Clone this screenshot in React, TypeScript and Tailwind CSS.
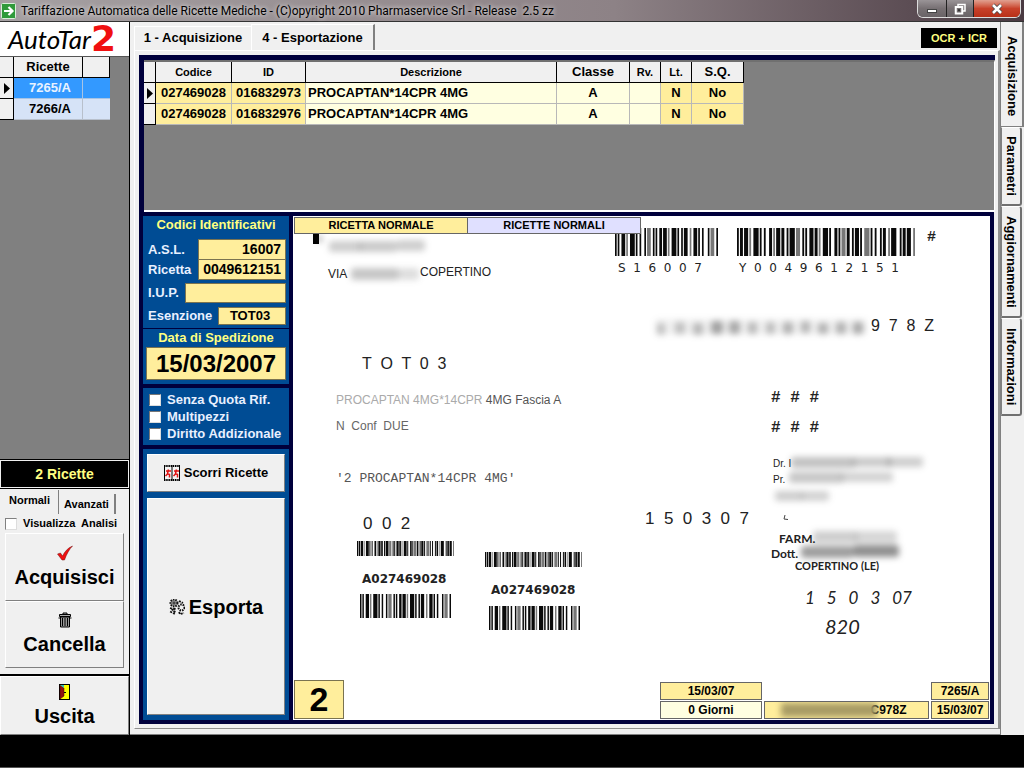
import React from "react";

const raised = "border border-t-white border-l-white border-r-[#808080] border-b-[#808080]";
const field = "border border-[#7a7350] bg-[#ffee9c] text-black";

function Barcode({ code, className }: { code: string; className: string }) {
  const bars: { x: number; w: number }[] = [];
  let x = 0;
  code.split("").forEach((c, i) => {
    const w = Number(c) + (i % 2 === 0 ? 0.6 : 0);
    if (i % 2 === 0) bars.push({ x, w });
    x += w;
  });
  return (
    <svg aria-hidden="true" className={className} viewBox={`0 0 ${x} 10`} preserveAspectRatio="none">
      {bars.map((b, i) => (
        <rect key={i} x={b.x} y="0" width={b.w} height="10" fill={i % 5 === 3 ? "#777" : "#0a0a0a"} />
      ))}
    </svg>
  );
}

function Smudges({ className, blobs }: { className: string; blobs: number[][] }) {
  return (
    <svg aria-hidden="true" className={`absolute blur-[3px] ${className}`}>
      {blobs.map(([x, y, w, h, o], i) => (
        <rect key={i} x={x} y={y} width={w} height={h} rx="3" fill="#333" fillOpacity={o / 100} />
      ))}
    </svg>
  );
}

function TitleBar() {
  const glass = "flex items-center justify-center border-r border-[#222] bg-linear-to-b from-[#9a9497] via-[#777073] to-[#6a6467]";
  return (
    <header className="flex h-[22px] shrink-0 items-center border-b border-[#333] bg-linear-to-r from-[#a5a0a2] via-[#8d8286] via-60% to-[#4a3a42] pl-px">
      <svg className="h-4 w-[15px] shrink-0" viewBox="0 0 15 16">
        <rect x="0.5" y="0.5" width="14" height="15" rx="1" fill="#2f9a3a" stroke="#d8efd8" />
        <path d="M3 8h8M7.500 4l4 4-4 4" fill="none" stroke="#fff" strokeWidth="2.200" />
      </svg>
      <h1 className="ml-[5px] grow font-[Roboto,sans-serif] text-[12px] whitespace-pre text-black [text-shadow:0_0_5px_#fff]">
        Tariffazione Automatica delle Ricette Mediche - (C)opyright 2010 Pharmaservice Srl - Release  2.5 zz
      </h1>
      <div className="mr-[3px] mb-[3px] flex h-[18px] self-start overflow-hidden rounded-b-md border border-t-0 border-[#ddd]">
        <button aria-label="Riduci" className={`${glass} w-[29px]`}>
          <svg className="h-3 w-3" viewBox="0 0 12 12"><rect x="1.500" y="6.500" width="9" height="3" fill="#fff" stroke="#444" /></svg>
        </button>
        <button aria-label="Ripristina" className={`${glass} w-[27px]`}>
          <svg className="h-3 w-3" viewBox="0 0 12 12" fill="none">
            <path d="M4 3V1.500h7V8H9" stroke="#fff" strokeWidth="1.500" />
            <rect x="1.750" y="4" width="6.500" height="6.500" stroke="#fff" strokeWidth="2" />
            <rect x="4" y="6.200" width="2" height="2" fill="#333" />
          </svg>
        </button>
        <button aria-label="Chiudi" className="flex w-[46px] items-center justify-center bg-linear-to-b from-[#e0a090] via-[#c8412a] to-[#b83018]">
          <svg className="h-3 w-3" viewBox="0 0 12 12">
            <path d="M2 2l8 8M10 2l-8 8" stroke="#444" strokeWidth="4" />
            <path d="M2 2l8 8M10 2l-8 8" stroke="#fff" strokeWidth="2.600" />
          </svg>
        </button>
      </div>
    </header>
  );
}

function Pointer() {
  return (
    <svg aria-hidden="true" className="mx-auto h-[11px] w-[6px]" viewBox="0 0 6 11"><path d="M0 0l6 5.500-6 5.500z" fill="#000" /></svg>
  );
}

function Sidebar() {
  const head = "border-r border-b border-black bg-[#f0f0f0] p-0";
  const big = "flex flex-col items-center justify-center gap-1 bg-[#f0f0f0] text-[20px] leading-6 font-bold text-black";
  return (
    <aside className="flex w-[130px] shrink-0 flex-col border-r border-black bg-[#f0f0f0]">
      <div className="flex h-[34px] items-center bg-white pl-2">
        <span className="font-[Lato,sans-serif] text-[26px] leading-8 italic">AutoTar</span>
        <span className="font-['DejaVu_Sans',sans-serif] text-[36px] leading-8 font-bold text-[#f01010]">2</span>
      </div>
      <div className="grow border-t border-[#555] bg-[#808080]">
        <table className="w-[110px] table-fixed border-separate border-spacing-0 text-center text-[13px] leading-5 font-bold">
          <colgroup><col className="w-[14px]" /><col className="w-[69px]" /><col className="w-[27px]" /></colgroup>
          <thead>
            <tr className="h-[21px]"><th className={head} /><th className={head}>Ricette</th><th className={head} /></tr>
          </thead>
          <tbody>
            <tr className="h-[21px] bg-[#3399ff] text-[#e8f2ff]">
              <td className={head}><Pointer /></td>
              <td className="border-r border-b border-[#a8c4e4] p-0 pl-1">7265/A</td>
              <td className="border-b border-[#a8c4e4] p-0" />
            </tr>
            <tr className="h-[21px] bg-[#d6e3f7]">
              <td className={head} />
              <td className="border-r border-b border-[#b8c0cc] p-0 pl-1">7266/A</td>
              <td className="border-b border-[#b8c0cc] p-0" />
            </tr>
          </tbody>
        </table>
      </div>
      <div className="border-y border-black bg-[#f0f0f0] p-px">
        <div className="bg-black text-center text-[14px] leading-[26px] font-bold text-[#ffff80]">2 Ricette</div>
      </div>
      <div className="flex h-[187px] flex-col border-b-2 border-black px-[5px] pt-px pb-[6px]">
        <div className="flex h-6 items-end text-[11px] font-bold">
          <button className="h-full w-[54px] border-r border-[#808080] pr-1 pb-1 text-center">Normali</button>
          <button className="h-5 w-[57px] border-r-2 border-[#808080] text-center">Avanzati</button>
        </div>
        <label className="flex h-[19px] items-center gap-[6px] text-[11px] font-bold whitespace-pre">
          <input type="checkbox" className="h-3 w-3 appearance-none border border-[#808080] border-r-[#ddd] border-b-[#ddd] bg-white" />
          Visualizza  Analisi
        </label>
        <button className={`${big} ${raised} grow`}>
          <svg className="h-4 w-4" viewBox="0 0 16 16"><path d="M0.500 9l3-1 2 3c2-4 5-8 10-10-3 3-6 8-8 14H5z" fill="#f01010" stroke="#701010" strokeWidth="0.500" /></svg>
          Acquisisci
        </button>
        <button className={`${big} ${raised} grow`}>
          <svg className="h-4 w-4" viewBox="0 0 16 16" fill="none" stroke="#000">
            <path d="M6 2.500v-1.500h4v1.500M2.500 2.500h11v2h-11z" fill="#aaa" />
            <path d="M3.500 5h9v10h-9zM1.500 6h2M12.500 6h2" fill="#999" />
            <path d="M5.500 6v8M8 6v8M10.500 6v8" />
          </svg>
          Cancella
        </button>
      </div>
      <button className={`${big} ${raised} h-[59px]`}>
        <svg className="h-4 w-3" viewBox="0 0 12 16">
          <rect x="0.500" y="0.500" width="10" height="15" fill="#ffff00" stroke="#000" />
          <path d="M1 1l4 3v8l-4 3z" fill="#901010" stroke="#400" strokeWidth="0.500" />
          <path d="M1 1h4v3z" fill="#30c0c0" /><rect x="5" y="8" width="2" height="1" fill="#000" />
        </svg>
        Uscita
      </button>
    </aside>
  );
}

const products = [
  { code: "027469028", id: "016832973", name: "PROCAPTAN*14CPR 4MG", cls: "A", lt: "N", sq: "No" },
  { code: "027469028", id: "016832976", name: "PROCAPTAN*14CPR 4MG", cls: "A", lt: "N", sq: "No" },
];

function ProductGrid() {
  const th = "border-r border-b border-black bg-[#f0f0f0] p-0 font-bold";
  const gold = "border-r border-b border-[#b8b8b8] bg-[#ffee9c] p-0";
  const pale = "border-r border-b border-[#b8b8b8] bg-[#ffffe1] p-0";
  return (
    <div className="h-[152px] shrink-0 border-t-2 border-r border-b-2 border-t-[#707070] border-r-white border-b-white bg-[#808080]">
      <table className="w-[600px] table-fixed border-separate border-spacing-0 text-center text-[13px] leading-5 font-bold">
        <colgroup>
          <col className="w-[12px]" /><col className="w-[76px]" /><col className="w-[74px]" /><col className="w-[251px]" />
          <col className="w-[73px]" /><col className="w-[31px]" /><col className="w-[31px]" /><col className="w-[52px]" />
        </colgroup>
        <thead>
          <tr className="h-[21px] text-[11px]">
            <th className={th} /><th className={th}>Codice</th><th className={th}>ID</th><th className={th}>Descrizione</th>
            <th className={`${th} text-[13px]`}>Classe</th><th className={th}>Rv.</th><th className={th}>Lt.</th><th className={`${th} text-[13px]`}>S.Q.</th>
          </tr>
        </thead>
        <tbody>
          {products.map((p, i) => (
            <tr key={p.id} className="h-[21px]">
              <td className={th}>{i === 0 && <Pointer />}</td>
              <td className={gold}>{p.code}</td>
              <td className={gold}>{p.id}</td>
              <td className={`${pale} pl-[2px] text-left`}>{p.name}</td>
              <td className={pale}>{p.cls}</td>
              <td className={pale} />
              <td className={gold}>{p.lt}</td>
              <td className={gold}>{p.sq}</td>
            </tr>
          ))}
        </tbody>
      </table>
    </div>
  );
}

function Codes() {
  const box = "h-3 w-3 appearance-none border border-t-[#777] border-l-[#777] border-r-[#ddd] border-b-[#ddd] bg-white";
  const row = "flex items-center justify-between pr-[3px] pl-[5px]";
  return (
    <div className="flex w-[146px] shrink-0 flex-col gap-1 text-[13px] font-bold text-[#e8f0ff]">
      <div>
        <section className="h-[113px] border-b border-[#00003c] bg-[#004c94]">
          <h2 className="mb-[5px] text-center leading-[18px] text-[#ffff80]">Codici Identificativi</h2>
          <div className={row}>
            <label htmlFor="asl">A.S.L.</label>
            <input id="asl" readOnly value="16007" className={`${field} h-[21px] w-[88px] pr-1 text-right text-[14px]`} />
          </div>
          <div className={`${row} -mt-px`}>
            <label htmlFor="ric">Ricetta</label>
            <input id="ric" readOnly value="0049612151" className={`${field} h-[21px] w-[88px] pr-1 text-right text-[14px]`} />
          </div>
          <div className={`${row} mt-[3px]`}>
            <label htmlFor="iup">I.U.P.</label>
            <input id="iup" readOnly value="" className={`${field} h-5 w-[101px]`} />
          </div>
          <div className={`${row} mt-[3px]`}>
            <label htmlFor="ese">Esenzione</label>
            <input id="ese" readOnly value="TOT03" className={`${field} h-[18px] w-[68px] pr-1 text-center`} />
          </div>
        </section>
        <section className="h-[55px] bg-[#004c94] px-[3px]">
          <label htmlFor="data" className="block text-center leading-[18px] text-[#ffff80]">Data di Spedizione</label>
          <input id="data" readOnly value="15/03/2007" className={`${field} h-[33px] w-full text-center text-[24px]`} />
        </section>
      </div>
      <section className="flex h-[57px] flex-col justify-center bg-[#004c94] pl-[6px] leading-[17px]">
        <label className="flex items-center gap-[6px]"><input type="checkbox" className={box} />Senza Quota Rif.</label>
        <label className="flex items-center gap-[6px]"><input type="checkbox" className={box} />Multipezzi</label>
        <label className="flex items-center gap-[6px] whitespace-nowrap"><input type="checkbox" className={box} />Diritto Addizionale</label>
      </section>
      <section className="flex grow flex-col gap-[6px] bg-[#004c94] px-1 py-[5px] text-black">
        <button className={`${raised} flex h-[38px] items-center justify-center gap-1 bg-[#f0f0f0]`}>
          <svg className="h-4 w-4" viewBox="0 0 16 16">
            <rect width="16" height="16" fill="#f4f4f4" />
            <path d="M0 1h16M0 15h16" stroke="#000" strokeWidth="2" strokeDasharray="1.500 0.700" />
            <path d="M0.500 0v16M8 0v16M15.500 0v16" stroke="#000" />
            <path d="M4.500 4.500l-1 4 2 1v3M3.500 9l-2 2M2 6h5M12.500 4.500l-1 4 2 1v3M11.500 9l-2 2M10 6h5" stroke="#e01010" strokeWidth="1.500" fill="none" />
          </svg>
          Scorri Ricette
        </button>
        <button className={`${raised} flex grow items-center justify-center gap-1 bg-[#f0f0f0] text-[20px]`}>
          <svg className="h-4 w-4" viewBox="0 0 16 16" fill="none" stroke="#111">
            <circle cx="5" cy="4" r="3.500" fill="#999" strokeWidth="2" strokeDasharray="1.500 1" />
            <circle cx="5" cy="4" r="1" fill="#fff" />
            <circle cx="12.500" cy="8.500" r="3" strokeWidth="2" strokeDasharray="1.500 1" />
            <path d="M1 9l3 1-2 3 4 2M6 9l-1 3 2 2M10 13l1 2 4-1M10 2l4 2" strokeWidth="1.800" strokeDasharray="2 1" />
          </svg>
          Esporta
        </button>
      </section>
    </div>
  );
}

const CODE_A = "1112311241121311321112213112411211321231121411321";
const CODE_B = "11213112411213211131221141321112312112411321113122113112411213112211431121321";

function Scan() {
  const note = "absolute leading-4 whitespace-pre text-[#222]";
  const ocr = "font-['DejaVu_Sans',sans-serif]";
  const mono = "font-['Liberation_Mono',monospace]";
  const stamp = "font-[Lato,sans-serif]";
  return (
    <div className="relative min-w-0 grow overflow-hidden bg-white">
      <div className="absolute top-px left-5 h-[27px] w-[6px] bg-black" />
      <Smudges className="top-5 left-6 h-6 w-[130px]" blobs={[[0, 0, 5, 6, 50], [12, 5, 32, 11, 24], [42, 5, 38, 11, 26], [80, 4, 28, 11, 24]]} />
      <p className={`${note} top-[50px] left-[35px] text-[12px]`}>VIA</p>
      <Smudges className="top-12 left-[56px] h-5 w-[76px]" blobs={[[2, 4, 48, 12, 28], [50, 4, 20, 12, 16]]} />
      <p className={`${note} top-[48px] left-[127px] text-[12px]`}>COPERTINO</p>

      <Barcode code={CODE_A} className="absolute top-[12px] left-[322px] h-7 w-[103px]" />
      <Barcode code={CODE_B} className="absolute top-[12px] left-[444px] h-7 w-[178px]" />
      <p className={`${note} ${ocr} top-[44px] left-[325px] text-[12px]`}>S  1  6  0  0  7</p>
      <p className={`${note} ${ocr} top-[44px] left-[446px] text-[12px]`}>Y  0  0  4  9  6  1  2  1  5  1</p>
      <p className={`${note} ${mono} top-[14px] left-[634px] text-[15px] font-bold`}>#</p>
      <Smudges
        className="top-[99px] left-[356px] h-6 w-[230px]"
        blobs={[[6, 4, 212, 16, 7], [8, 8, 8, 12, 26], [26, 7, 10, 12, 26], [44, 8, 10, 12, 30], [62, 6, 12, 13, 42], [80, 6, 11, 13, 38], [99, 7, 9, 12, 30], [117, 7, 9, 12, 28], [134, 7, 10, 12, 34], [152, 6, 9, 12, 32], [169, 8, 10, 11, 34], [187, 7, 10, 12, 34], [204, 7, 10, 12, 38]]}
      />
      <p className={`${note} top-[102px] left-[578px] text-[16px]`}>9  7  8  Z</p>

      <p className={`${note} top-[140px] left-[69px] text-[16px]`}>T  O  T  0  3</p>
      <p className={`${note} top-[176px] left-[43px] text-[12px]`}>
        <span className="text-[#aaa]">PROCAPTAN 4MG*14CPR</span> <span className="text-[#555]">4MG Fascia A</span>
      </p>
      <p className={`${note} top-[202px] left-[43px] text-[12px] text-[#666]`}>N  Conf  DUE</p>
      <p className={`${note} ${mono} top-[255px] left-[43px] text-[13px] text-[#555]`}>'2 PROCAPTAN*14CPR 4MG'</p>
      <p className={`${note} top-[300px] left-[70px] text-[17px]`}>0  0  2</p>

      <Barcode code={CODE_B} className="absolute top-[325px] left-[64px] h-[15px] w-[97px]" />
      <p className={`${note} ${ocr} top-[355px] left-[69px] text-[12px] font-bold`}>A027469028</p>
      <Barcode code={CODE_A} className="absolute top-[378px] left-[67px] h-6 w-[91px]" />
      <Barcode code={CODE_B} className="absolute top-[336px] left-[192px] h-[15px] w-[97px]" />
      <p className={`${note} ${ocr} top-[366px] left-[198px] text-[12px] font-bold`}>A027469028</p>
      <Barcode code={CODE_A} className="absolute top-[390px] left-[196px] h-6 w-[91px]" />

      <p className={`${note} ${mono} top-[174px] left-[478px] text-[16px] font-bold`}># # #</p>
      <p className={`${note} ${mono} top-[204px] left-[478px] text-[16px] font-bold`}># # #</p>
      <p className={`${note} top-[240px] left-[480px] text-[10px]`}>Dr. I</p>
      <p className={`${note} top-[256px] left-[480px] text-[10px]`}>Pr.</p>
      <Smudges className="top-[237px] left-[476px] h-14 w-[160px]" blobs={[[22, 4, 64, 11, 30], [84, 4, 38, 10, 26], [118, 4, 36, 10, 24], [20, 19, 54, 11, 28], [72, 19, 52, 10, 22], [6, 38, 28, 10, 24], [32, 38, 28, 10, 22]]} />
      <p className={`${note} top-[295px] left-[352px] text-[17px]`}>1  5  0  3  0  7</p>
      <svg aria-hidden="true" className="absolute top-[299px] left-[490px] h-[6px] w-[6px]" viewBox="0 0 6 6"><path d="M2 0L1 4l4 0.500" fill="none" stroke="#444" /></svg>

      <p className={`${note} ${stamp} top-[315px] left-[486px] text-[12px] font-bold`}>FARM.</p>
      <p className={`${note} ${stamp} top-[330px] left-[478px] text-[12px] font-bold`}>Dott.</p>
      <Smudges className="top-[311px] left-[500px] h-9 w-[115px]" blobs={[[20, 4, 44, 12, 24], [62, 4, 42, 12, 20], [8, 19, 52, 12, 48], [60, 18, 46, 12, 55]]} />
      <p className={`${note} ${stamp} top-[342px] left-[502px] text-[11px] font-bold`}>COPERTINO (LE)</p>
      <p className={`${note} ${stamp} top-[374px] left-[512px] text-[17px] italic`}>1   5   0   3   07</p>
      <p className={`${note} ${stamp} top-[402px] left-[532px] text-[20px] italic`}>820</p>

      <div className="absolute top-px left-px flex text-center text-[11px] leading-[15px] font-bold">
        <div className="w-[174px] border border-[#666] bg-[#ffee9c]">RICETTA NORMALE</div>
        <div className="w-[173px] border border-l-0 border-[#666] bg-[#e0e0ff]">RICETTE NORMALI</div>
      </div>
      <div className={`${field} absolute bottom-px left-px flex h-[39px] w-[50px] items-center justify-center text-[34px] font-bold`}>2</div>
      <div className="absolute right-px bottom-px grid grid-cols-[102px_165px_58px] gap-x-[2px] gap-y-px text-center text-[12px] leading-4 font-bold">
        <div className="border border-[#666] bg-[#ffee9c]">15/03/07</div>
        <div />
        <div className="border border-[#666] bg-[#ffee9c]">7265/A</div>
        <div className="border border-[#666] bg-[#ffffe1]">0 Giorni</div>
        <div className="relative overflow-hidden border border-[#666] bg-[#ffee9c] pl-[84px]">
          C978Z
          <div className="absolute top-px left-4 h-[14px] w-24 bg-[#a89b64] blur-[3px]" />
        </div>
        <div className="border border-[#666] bg-[#ffee9c]">15/03/07</div>
      </div>
    </div>
  );
}

function SideTabs() {
  const tab = "flex w-[21px] items-center justify-center rounded-r-[3px] border border-l-[#808080] border-t-white border-r-2 border-r-[#707070] border-b-2 border-b-[#707070] [writing-mode:vertical-rl]";
  return (
    <nav className="flex w-[23px] shrink-0 flex-col text-[13px] leading-4 font-bold">
      <button className="flex h-[105px] w-[23px] items-center justify-center border-r-2 border-b border-[#808080] pt-1 [writing-mode:vertical-rl]">Acquisizione</button>
      <button className={`${tab} h-[79px]`}>Parametri</button>
      <button className={`${tab} h-[112px]`}>Aggiornamenti</button>
      <button className={`${tab} h-[98px]`}>Informazioni</button>
    </nav>
  );
}

export default function App() {
  return (
    <div className="flex min-h-screen flex-col bg-black font-['Liberation_Sans',Arial,sans-serif] text-black">
      <TitleBar />
      <div className="flex grow bg-[#f0f0f0]">
        <Sidebar />
        <main className="flex min-w-0 grow flex-col border-r border-b border-r-[#808080] border-b-[#808080] pl-1">
          <div className="flex h-7 shrink-0 items-end justify-between text-[13px] font-bold">
            <div className="flex items-end">
              <button className="h-6 w-[117px] border-t border-l border-white pb-px">1 - Acquisizione</button>
              <button className="h-[26px] w-[124px] border-t border-r-2 border-l border-t-white border-r-[#808080] border-l-white">4 - Esportazione</button>
            </div>
            <button className="mr-[3px] mb-[2px] h-5 w-[76px] bg-black text-[11px] text-[#ffff80]">OCR + ICR</button>
          </div>
          <div className="flex grow flex-col border-t border-r-2 border-b border-l border-t-white border-r-[#909090] border-b-[#909090] border-l-white pt-1 pr-[3px] pb-1 pl-1">
            <div className="flex grow flex-col">
              <div className="border-t-[5px] border-l-[5px] border-[#00003c]"><ProductGrid /></div>
              <div className="mr-px flex grow gap-1 border-4 border-[#00003c] bg-[#00003c]">
                <Codes />
                <Scan />
              </div>
            </div>
          </div>
          <div className="h-[5px] shrink-0" />
        </main>
        <SideTabs />
      </div>
      <footer className="h-[33px] shrink-0 border-b border-[#555] bg-black" />
    </div>
  );
}
